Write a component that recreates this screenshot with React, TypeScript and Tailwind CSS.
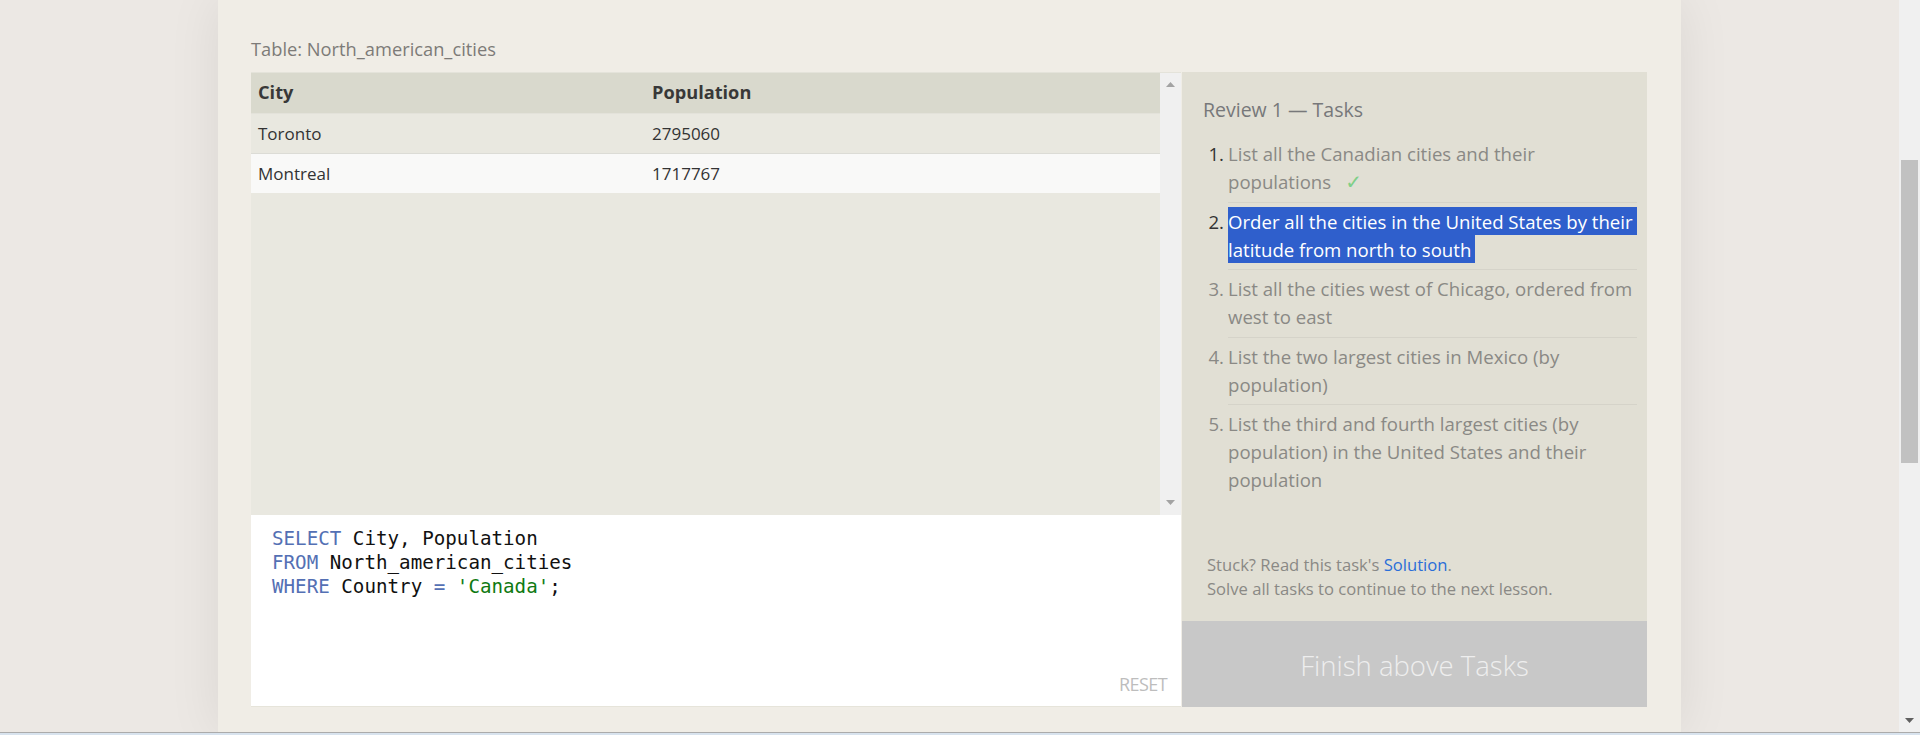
import React from "react";

const Up = ({ color = "#a3a3a3" }: { color?: string }) => (
  <svg width="9" height="5" viewBox="0 0 9 5"><path d="M4.5 0 L9 5 L0 5 Z" fill={color} /></svg>
);
const Down = ({ color = "#a3a3a3" }: { color?: string }) => (
  <svg width="9" height="5" viewBox="0 0 9 5"><path d="M0 0 L9 0 L4.5 5 Z" fill={color} /></svg>
);

const tasks: { lines: string[]; numDark: boolean; done?: boolean; selected?: boolean }[] = [
  { lines: ["List all the Canadian cities and their", "populations"], numDark: true, done: true },
  { lines: ["Order all the cities in the United States by their", "latitude from north to south"], numDark: true, selected: true },
  { lines: ["List all the cities west of Chicago, ordered from", "west to east"], numDark: false },
  { lines: ["List the two largest cities in Mexico (by", "population)"], numDark: false },
  { lines: ["List the third and fourth largest cities (by", "population) in the United States and their", "population"], numDark: false },
];

export default function App() {
  return (
    <div className="w-[1920px] h-[735px] flex flex-col overflow-hidden bg-[#ece8e4] font-['Open_Sans','Noto_Sans',sans-serif]">
      <div className="flex flex-1 min-h-0">
        <div className="flex-1 flex justify-center bg-[#ece8e4]">
          <div className="w-[1463px] h-full bg-[#f0ede6] shadow-[0_0_50px_rgba(0,0,0,0.08)] pl-[33px] pr-[34px] pt-[37px]">
            <div className="h-[24px] leading-[24px] text-[18.3px] text-[#7d7b78]">Table: North_american_cities</div>
            <div className="mt-[11px] flex gap-[1px] h-[635px]">
              {/* left panel */}
              <div className="w-[930px] flex flex-col">
                <div className="flex h-[443px] border-t border-[#e4e3da]">
                  <div className="flex-1 flex flex-col bg-[#e9e8e0] text-[17px] text-[#333]">
                    <div className="flex items-center h-[41px] bg-[#d9d9cd] font-bold text-[18.2px] text-[#383838] border-b border-[#e3e2da]">
                      <div className="w-[401px] pl-[7px]">City</div>
                      <div className="flex-1">Population</div>
                    </div>
                    <div className="flex items-center h-[40px] bg-[#e9e8e0] border-b border-[#dcdcd6]">
                      <div className="w-[401px] pl-[7px]">Toronto</div>
                      <div className="flex-1">2795060</div>
                    </div>
                    <div className="flex items-center h-[39px] bg-[#f9f9f8]">
                      <div className="w-[401px] pl-[7px]">Montreal</div>
                      <div className="flex-1">1717767</div>
                    </div>
                  </div>
                  <div className="w-[21px] bg-[#f0f0f0] flex flex-col items-center justify-between pt-[9px] pb-[10px]">
                    <Up />
                    <Down />
                  </div>
                </div>
                <div className="flex-1 bg-white flex flex-col border-b border-[#e6e4da]">
                  <div className="pl-[21px] pt-[12px] font-['DejaVu_Sans_Mono',monospace] text-[19.2px] leading-[24px] text-[#111]">
                    <div><span className="text-[#5470b4]">SELECT</span> City, Population</div>
                    <div><span className="text-[#5470b4]">FROM</span> North_american_cities</div>
                    <div><span className="text-[#5470b4]">WHERE</span> Country <span className="text-[#5470b4]">=</span> <span className="text-[#0f7a12]">'Canada'</span>;</div>
                  </div>
                  <div className="mt-auto self-end pr-[14px] pb-[10px] text-[18px] leading-[24px] tracking-[-0.6px] text-[#bdbdbd]">RESET</div>
                </div>
              </div>
              {/* right panel */}
              <div className="w-[465px] flex flex-col">
                <div className="flex-1 bg-[#e1dfd4] flex flex-col pl-[21px] pr-[10px] pt-[24px] pb-[20px]">
                  <div className="h-[28px] leading-[28px] text-[19.5px] text-[#77787a]">Review 1 — Tasks</div>
                  <div className="mt-[11px] flex flex-col">
                    {tasks.map((t, i) => (
                      <div key={i} className="flex text-[18.6px] leading-[28px]">
                        <div className={`w-[25px] pt-[5px] text-right pr-[4px] ${t.numDark ? "text-[#333]" : "text-[#8a8985]"}`}>{i + 1}.</div>
                        <div className={`flex-1 pt-[5px] pb-[5.5px] whitespace-nowrap ${i < tasks.length - 1 ? "border-b border-[#d5d3c9]" : ""} text-[#8a8985]`}>
                          {t.lines.map((l, j) => (
                            <div key={j} className="h-[28px]">
                              {t.selected ? (
                                <span className="bg-[#2f5fcc] text-white py-[1.5px] pr-[4px]">{l}</span>
                              ) : (
                                <span>{l}</span>
                              )}
                              {t.done && j === t.lines.length - 1 && (
                                <span className="ml-[14px] text-[#7fcf88] font-['DejaVu_Sans',sans-serif] text-[20px]">✓</span>
                              )}
                            </div>
                          ))}
                        </div>
                      </div>
                    ))}
                  </div>
                  <div className="mt-auto pl-[4px] text-[16.6px] leading-[24px] text-[#8a8985]">
                    <div>Stuck? Read this task's <span className="text-[#2a6ed8]">Solution</span>.</div>
                    <div>Solve all tasks to continue to the next lesson.</div>
                  </div>
                </div>
                <div className="h-[86px] bg-[#c8c8c8] flex items-center justify-center pt-[4px] text-[27.5px] font-light text-[#eeeeee]">
                  Finish above Tasks
                </div>
              </div>
            </div>
          </div>
        </div>
        <div className="w-[21px] bg-[#f0f0f0] flex flex-col items-center pt-[160px] pb-[9px]">
          <div className="w-[17px] h-[303px] bg-[#c1c1c1]" />
          <div className="mt-auto"><Down color="#606060" /></div>
        </div>
      </div>
      <div className="h-[1px] bg-[#ababab]" />
      <div className="h-[2px] bg-[#d8e3ee]" />
    </div>
  );
}
